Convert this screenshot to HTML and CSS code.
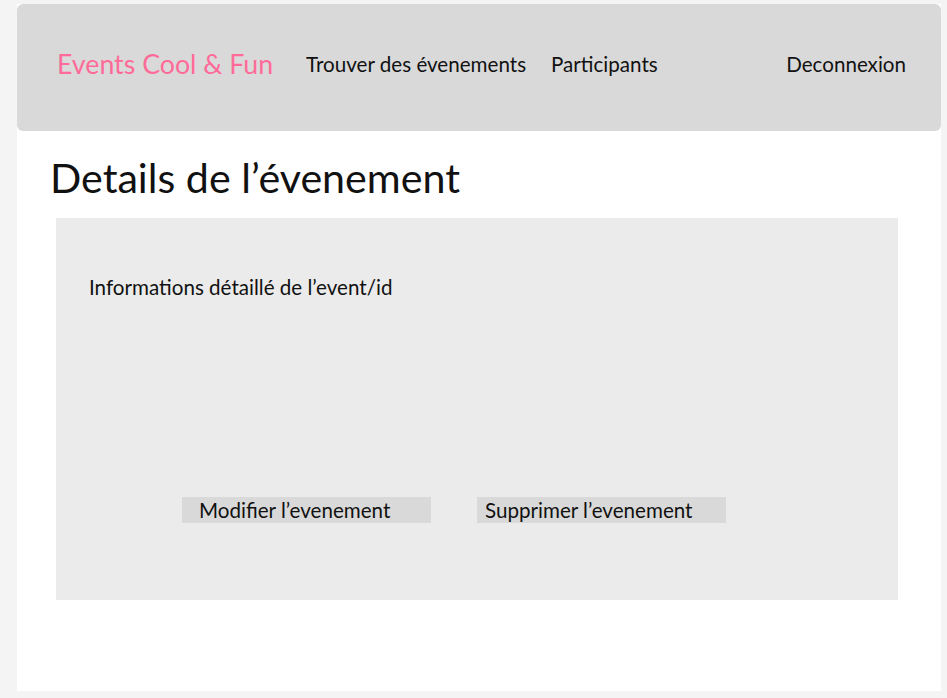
FILE: index.html
```html
<!DOCTYPE html>
<html lang="fr">
<head>
<meta charset="utf-8">
<title>Details de l'évenement</title>
<link rel="stylesheet" href="styles.css">
</head>
<body>
<div class="page">
  <header class="header">
    <div class="logo">Events Cool &amp; Fun</div>
    <nav class="nav">
      <a class="nav-link">Trouver des évenements</a>
      <a class="nav-link">Participants</a>
    </nav>
    <a class="nav-link logout">Deconnexion</a>
  </header>
  <h1 class="title">Details de l’évenement</h1>
  <section class="details">
    <p class="info">Informations détaillé de l’event/id</p>
    <div class="actions">
      <div class="btn">Modifier l’evenement</div>
      <div class="btn btn-2">Supprimer l’evenement</div>
    </div>
  </section>
</div>
</body>
</html>
```
FILE: styles.css
```css
html, body {
  margin: 0;
  padding: 0;
  background: #f4f4f4;
  font-family: Lato, "Noto Sans", sans-serif;
  color: #111;
}
.page {
  margin: 4px 0 0 17px;
  width: 924px;
  height: 687px;
  background: #fff;
  overflow: hidden;
}
.header {
  height: 127px;
  background: #d9d9d9;
  border-radius: 6px;
  display: flex;
  align-items: center;
  padding: 0 35px 0 40px;
  box-sizing: border-box;
}
.logo {
  color: #ff6b98;
  font-size: 26.75px;
  margin-top: -7px;
}
.nav {
  display: flex;
  gap: 25px;
  margin-left: 33px;
}
.nav-link {
  font-size: 20.6px;
  color: #111;
  margin-top: -7px;
}
.logout {
  margin-left: auto;
}
.title {
  font-weight: 400;
  font-size: 41.2px;
  margin: 22px 0 0 33px;
  line-height: 48px;
}
.details {
  margin: 17px 0 0 39px;
  width: 842px;
  height: 382px;
  background: #ebebeb;
  padding: 55px 0 0 33px;
  box-sizing: border-box;
}
.info {
  margin: 0;
  font-size: 20.6px;
  line-height: 28px;
}
.actions {
  display: flex;
  gap: 46px;
  margin: 196px 0 0 93px;
}
.btn {
  width: 249px;
  height: 26px;
  background: #d9d9d9;
  font-size: 20.6px;
  line-height: 26px;
  padding-left: 17px;
  box-sizing: border-box;
}
.btn-2 {
  padding-left: 8px;
}
```
